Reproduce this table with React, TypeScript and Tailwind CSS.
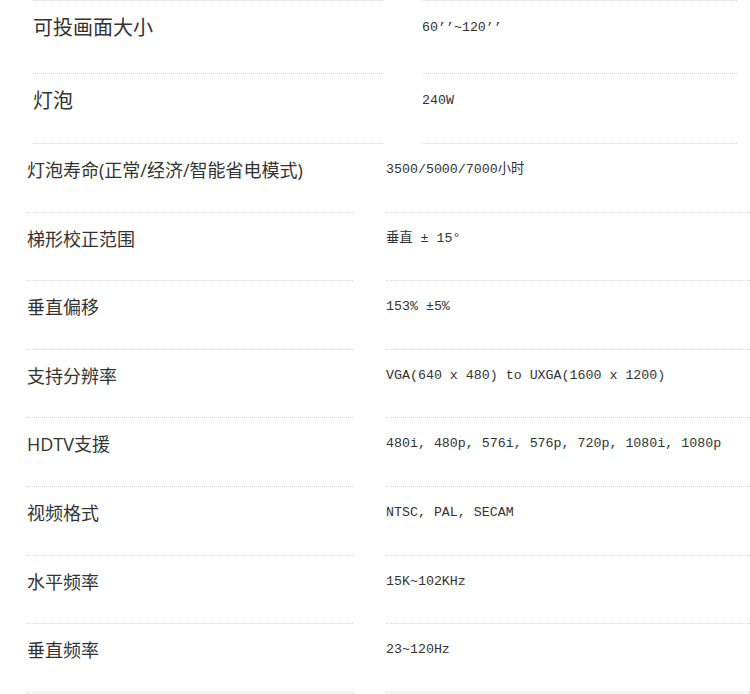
import React from 'react';

interface SpecRow {
  label: string;
  value: string;
}

const topRows: SpecRow[] = [
  { label: '可投画面大小', value: '60’’~120’’' },
  { label: '灯泡', value: '240W' },
];

const specRows: SpecRow[] = [
  { label: '灯泡寿命(正常/经济/智能省电模式)', value: '3500/5000/7000小时' },
  { label: '梯形校正范围', value: '垂直 ± 15°' },
  { label: '垂直偏移', value: '153% ±5%' },
  { label: '支持分辨率', value: 'VGA(640 x 480) to UXGA(1600 x 1200)' },
  { label: 'HDTV支援', value: '480i, 480p, 576i, 576p, 720p, 1080i, 1080p' },
  { label: '视频格式', value: 'NTSC, PAL, SECAM' },
  { label: '水平频率', value: '15K~102KHz' },
  { label: '垂直频率', value: '23~120Hz' },
];

const labelFont = "font-['Open_Sans','Noto_Sans_CJK_SC',sans-serif]";
const valueFont = "font-['Liberation_Mono','Noto_Sans_CJK_SC',monospace]";

const App: React.FC = () => {
  return (
    <div className="w-[750px] h-[694px] overflow-hidden bg-white text-[#333]">
      {/* first block, slightly indented */}
      <div className="flex flex-col pl-[33px] pr-[13px]">
        {topRows.map((row, i) => (
          <div key={row.label} className={i === 0 ? 'flex h-[74px]' : 'flex h-[70px]'}>
            <div
              className={
                i === 0
                  ? 'w-[351px] border-y border-dotted border-[#d9d9d9] pt-[12px]'
                  : 'w-[351px] border-b border-dotted border-[#d9d9d9] pt-[12px]'
              }
            >
              <span className={`${labelFont} text-[20px] leading-[30px]`}>{row.label}</span>
            </div>
            <div className="w-[38px]" />
            <div
              className={
                i === 0
                  ? 'flex-1 border-y border-dotted border-[#d9d9d9] pt-[12px]'
                  : 'flex-1 border-b border-dotted border-[#d9d9d9] pt-[12px]'
              }
            >
              <span className={`${valueFont} text-[13.3px] leading-[20px]`}>{row.value}</span>
            </div>
          </div>
        ))}
      </div>

      {/* main spec table */}
      <div className="flex flex-col pl-[27px]">
        {specRows.map((row) => (
          <div key={row.label} className="flex h-[68.6px]">
            <div className="w-[326px] border-b border-dotted border-[#d9d9d9] pt-[13px]">
              <span className={`${labelFont} text-[18px] leading-[27px] whitespace-nowrap`}>{row.label}</span>
            </div>
            <div className="w-[33px]" />
            <div className="flex-1 border-b border-dotted border-[#d9d9d9] pt-[11px]">
              <span className={`${valueFont} text-[13.3px] leading-[20px] whitespace-pre`}>{row.value}</span>
            </div>
          </div>
        ))}
      </div>
    </div>
  );
};

export default App;
